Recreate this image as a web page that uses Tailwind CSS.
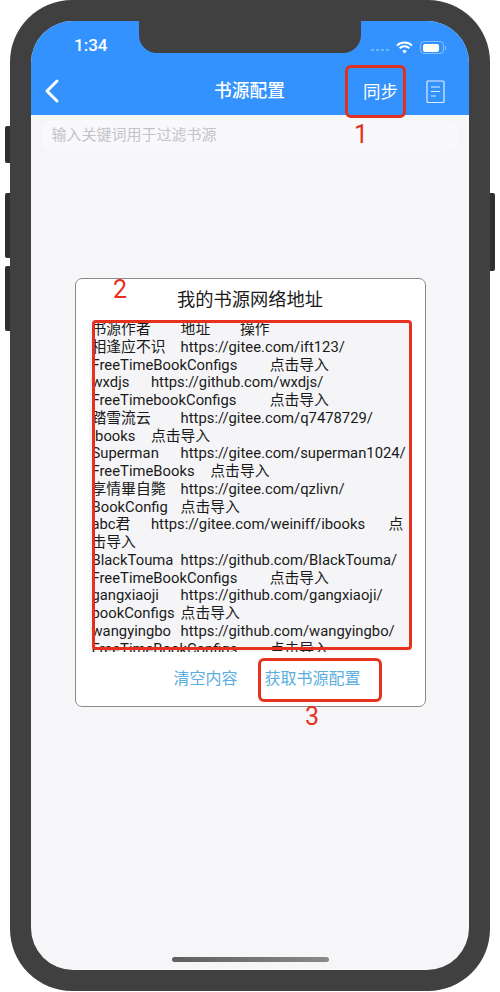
<!DOCTYPE html>
<html lang="zh">
<head>
    <meta charset="UTF-8">
    <title>书源配置</title>
    <script src="https://cdn.jsdelivr.net/npm/@tailwindcss/browser@4"></script>
</head>
<body class="bg-white h-[992px] overflow-hidden font-['Roboto','Noto_Sans_CJK_SC',sans-serif]">
    <div class="relative w-[500px] h-[992px]">
        <!-- side buttons -->
        <div class="absolute left-[5px] top-[126px] w-[6px] h-[37px] bg-[#2f2f2f] rounded-l-[2px]"></div>
        <div class="absolute left-[5px] top-[193px] w-[6px] h-[65px] bg-[#2f2f2f] rounded-l-[2px]"></div>
        <div class="absolute left-[5px] top-[266px] w-[6px] h-[65px] bg-[#2f2f2f] rounded-l-[2px]"></div>
        <div class="absolute left-[489px] top-[193px] w-[6px] h-[78px] bg-[#2f2f2f] rounded-r-[2px]"></div>

        <!-- phone -->
        <div class="absolute left-[10px] top-0 w-[480px] h-[991px] bg-[#404040] rounded-[62px] p-[21px]">
            <div class="relative w-full h-full bg-[#f6f6f9] rounded-[42px] overflow-hidden flex flex-col items-center">
                <div class="absolute left-[108px] top-0 w-[222px] h-[32px] bg-[#404040] rounded-b-[18px]"></div>

                <header class="w-full h-[94px] shrink-0 bg-[#3392fd] text-white flex flex-col">
                    <div class="h-[48px] flex items-center justify-between pl-[43px] pr-[23px] pt-[2px]">
                        <span class="text-[17px] font-medium">1:34</span>
                        <div class="flex items-center gap-[6px] mt-[3px]">
                            <div class="flex gap-[2px] mr-[1px] mt-[4px]">
                                <i class="w-[3px] h-[2px] bg-white/30"></i><i class="w-[3px] h-[2px] bg-white/30"></i><i class="w-[3px] h-[2px] bg-white/30"></i><i class="w-[3px] h-[2px] bg-white/30"></i>
                            </div>
                            <svg width="17" height="13" viewBox="0 0 17 13" fill="none" stroke="white" stroke-width="2">
                                <path d="M1 4.6a10.8 10.8 0 0 1 15 0"/>
                                <path d="M3.6 7.3a7 7 0 0 1 9.8 0"/>
                                <path d="M8.5 12.5 6.2 10a3.3 3.3 0 0 1 4.6 0z" fill="white" stroke="none"/>
                            </svg>
                            <div class="flex items-center ml-[1px]">
                                <div class="w-[24px] h-[13px] rounded-[4px] border border-white/40 p-[1.5px]">
                                    <div class="w-[16px] h-full bg-white rounded-[2px]"></div>
                                </div>
                                <div class="w-[1px] h-[4px] bg-white/40 ml-[1px]"></div>
                            </div>
                        </div>
                    </div>
                    <div class="relative flex-1 flex items-center justify-center">
                        <svg class="absolute left-[13px] top-[9px]" width="16" height="26" viewBox="0 0 16 26" fill="none" stroke="white" stroke-width="3" stroke-linecap="round" stroke-linejoin="round">
                            <path d="M13 3 3 13l10 10"/>
                        </svg>
                        <span class="text-[17.75px] font-medium mr-[1px] -mt-[2px]">书源配置</span>
                        <span class="absolute left-[332px] top-[10px] text-[17.5px] leading-[26px]">同步</span>
                        <svg class="absolute left-[395px] top-[11px]" width="19" height="24" viewBox="0 0 19 24" fill="none" stroke="white" stroke-opacity="0.85" stroke-width="1.2">
                            <rect x="1" y="1" width="17" height="21.5" rx="1"/>
                            <path d="M5 7h9M5 11.5h9M5 16h5"/>
                        </svg>
                    </div>
                </header>

                <!-- search -->
                <div class="w-[417px] h-[32px] shrink-0 mt-[5px] rounded-[14px] bg-[#f9f9fc] pl-[10px] flex items-center text-[15px] text-[#c3c3c6]">
                    <span class="-mt-[1px]">输入关键词用于过滤书源</span>
                </div>

                <!-- dialog -->
                <div class="w-[351px] h-[429px] shrink-0 mt-[126px] bg-white border border-[#8a8a8a] rounded-[7px] flex flex-col items-center">
                    <h2 class="h-[41px] shrink-0 flex items-center text-[18.25px] text-[#1a1a1a]">我的书源网络地址</h2>
                    <pre class="w-[323px] h-[332px] shrink-0 ml-[1px] bg-[#f5f5f7] overflow-hidden pl-[2.5px] pt-[1px] text-[14.8px] leading-[17.75px] text-[#1a1a1a] [tab-size:29.7px] font-['Roboto','Noto_Sans_CJK_SC',sans-serif]">书源作者	地址	操作
相逢应不识	https://gitee.com/ift123/
FreeTimeBookConfigs		点击导入
wxdjs	https://github.com/wxdjs/
FreeTimebookConfigs		点击导入
踏雪流云	https://gitee.com/q7478729/
ibooks	点击导入
Superman	https://gitee.com/superman1024/
FreeTimeBooks	点击导入
享情畢自斃	https://gitee.com/qzlivn/
BookConfig	点击导入
abc君	https://gitee.com/weiniff/ibooks	点
击导入
BlackTouma	https://github.com/BlackTouma/
FreeTimeBookConfigs		点击导入
gangxiaoji	https://github.com/gangxiaoji/
bookConfigs	点击导入
wangyingbo	https://github.com/wangyingbo/
FreeTimeBookConfigs		点击导入</pre>
                    <div class="flex-1 w-full flex items-center text-[16px] text-[#5aaee0] pl-[98px] gap-[27px]">
                        <span>清空内容</span>
                        <span>获取书源配置</span>
                    </div>
                </div>

                <!-- home indicator -->
                <div class="absolute left-[141px] bottom-[8px] w-[157px] h-[5px] rounded-full bg-gradient-to-r from-[#5f5f5f] to-[#8a8a8a]"></div>
            </div>
        </div>

        <!-- red annotations drawn on the screenshot -->
        <div class="absolute left-[345px] top-[65px] w-[61px] h-[53px] border-[3px] border-[#e0301e] rounded-[6px]"></div>
        <span class="absolute left-[354px] top-[120px] text-[25px] leading-[30px] text-[#e0301e]">1</span>
        <div class="absolute left-[92px] top-[320px] w-[320px] h-[330px] border-[3px] border-[#e8301f] rounded-[4px]"></div>
        <span class="absolute left-[113px] top-[275px] text-[25px] leading-[30px] text-[#e8301f]">2</span>
        <div class="absolute left-[258px] top-[658px] w-[124px] h-[44px] border-[3px] border-[#e8301f] rounded-[6px]"></div>
        <span class="absolute left-[305px] top-[702px] text-[25px] leading-[30px] text-[#e8301f]">3</span>
    </div>
</body>
</html>
